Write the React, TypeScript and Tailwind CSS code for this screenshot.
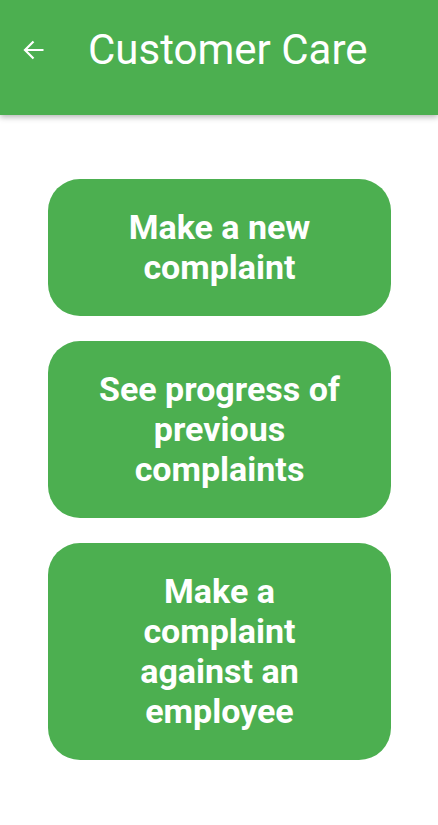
import React from 'react';

const options = [
  'Make a new complaint',
  'See progress of previous complaints',
  'Make a complaint against an employee',
];

const App: React.FC = () => {
  return (
    <div className="min-h-[825px] bg-white font-['Roboto',sans-serif]">
      <header className="h-[115px] bg-[#4caf50] shadow-[0_2px_6px_rgba(0,0,0,0.3)] flex items-start pt-[26px]">
        <button className="w-[88px] h-[48px] flex items-center pl-[23px] text-white">
          <svg width="21" height="20" viewBox="0 0 21 20" fill="none" stroke="currentColor" strokeWidth={2.2}>
            <path d="M20.5 10H2M10.5 1.5L2 10l8.5 8.5" />
          </svg>
        </button>
        <h1 className="text-white text-[42px] leading-[48px] font-normal">Customer Care</h1>
      </header>

      <main className="flex flex-col gap-[25px] pl-[48px] pr-[47px] pt-[64px]">
        {options.map((label) => (
          <button
            key={label}
            className="w-full rounded-[32px] bg-[#4caf50] text-white px-[46px] pt-[28px] pb-[29px] text-[34px] leading-[40px] font-bold text-center"
          >
            {label}
          </button>
        ))}
      </main>
    </div>
  );
};

export default App;
